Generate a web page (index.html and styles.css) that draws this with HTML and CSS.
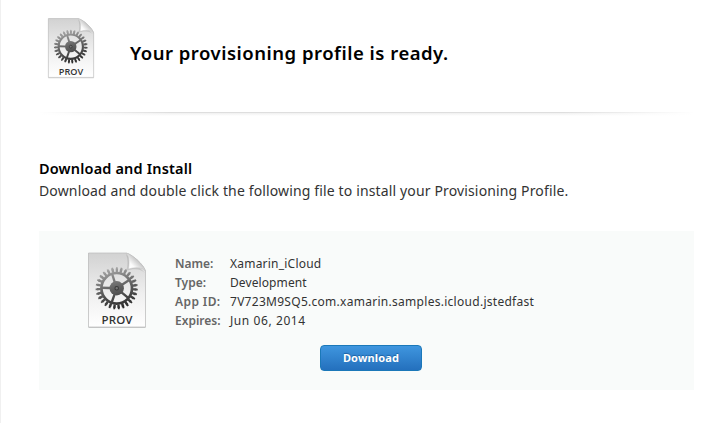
FILE: index.html
```html
<!DOCTYPE html>
<html lang="en">
<head>
<meta charset="utf-8">
<title>Provisioning profile</title>
<link rel="stylesheet" href="styles.css">
</head>
<body>
<svg class="defs" aria-hidden="true">
  <defs>
    <linearGradient id="paper" x1="0" y1="0" x2="0" y2="1"><stop offset="0" stop-color="#d2d2d2"/><stop offset=".55" stop-color="#efefef"/><stop offset="1" stop-color="#fff"/></linearGradient>
    <linearGradient id="metal" gradientUnits="userSpaceOnUse" x1="-6" y1="-20" x2="6" y2="20"><stop offset="0" stop-color="#a8a8a8"/><stop offset=".5" stop-color="#606060"/><stop offset="1" stop-color="#282828"/></linearGradient>
    <linearGradient id="fold" gradientUnits="userSpaceOnUse" x1="42" y1="18" x2="52" y2="8"><stop offset="0" stop-color="#fff"/><stop offset=".35" stop-color="#fafafa"/><stop offset="1" stop-color="#b8b8b8"/></linearGradient>
    <symbol id="profile" viewBox="0 0 60 78">
      <path d="M1.500 2H39C45 3 57 14 58.500 20V77H1.500Z" fill="#000" opacity=".2"/>
      <path d="M1.500 2H39C45 3 57 14 58.500 20V76H1.500Z" fill="url(#paper)" stroke="#bbb" stroke-width=".7"/>
      <path d="M39 3C41 8 41 15 39 20C47 17 54 18 58 22Z" fill="#000" opacity=".1"/>
      <path d="M39 2C42.500 6 42.500 12 41.500 18C48 16 55 16 58.500 20C57 14 45 3 39 2Z" fill="url(#fold)" stroke="#bbb" stroke-width=".4"/>
      <g transform="translate(29.700 37.300) scale(1.040)" fill="none" stroke="url(#metal)">
        <circle r="17.300" stroke-width="3.600" pathLength="54" stroke-dasharray="1.150 .85"/>
        <circle r="18.300" stroke-width="4" pathLength="54" stroke-dasharray=".75 1.250" stroke-dashoffset="-.2"/>
        <circle r="14.700" stroke-width="2.600"/>
        <path d="M0 0L-4.300-13.500M0 0L12-8M0 0L10.800 9M0 0L-4.800 13.500M0 0L-14.300-.5" stroke-width="2.300"/>
        <circle r="6.900" fill="url(#metal)" stroke="none"/>
        <circle r="1.700" fill="#777" stroke="#3a3a3a" stroke-width="1"/>
      </g>
      <text class="icon-label" x="30" y="72.500" text-anchor="middle" textLength="31">PROV</text>
    </symbol>
  </defs>
</svg>
<main class="page">
  <header class="header">
    <svg class="icon-small"><use href="#profile"/></svg>
    <h1 class="title">Your provisioning profile is ready.</h1>
  </header>
  <div class="divider"></div>
  <section class="intro">
    <h2 class="subtitle">Download and Install</h2>
    <p class="text">Download and double click the following file to install your Provisioning Profile.</p>
  </section>
  <section class="panel">
    <div class="details">
      <svg class="icon-large"><use href="#profile"/></svg>
      <dl class="list">
        <dt>Name:</dt><dd class="name">Xamarin_iCloud</dd>
        <dt>Type:</dt><dd class="type">Development</dd>
        <dt class="key-appid">App ID:</dt><dd class="appid">7V723M9SQ5.com.xamarin.samples.icloud.jstedfast</dd>
        <dt>Expires:</dt><dd class="date">Jun 06, 2014</dd>
      </dl>
    </div>
    <button class="button">Download</button>
  </section>
</main>
</body>
</html>
```
FILE: styles.css
```css
* { box-sizing: border-box; }
body { margin: 0; background: #fff; font-family: "Noto Sans", sans-serif; color: #333; }
.defs { position: absolute; width: 0; height: 0; }
.page { height: 423px; padding: 17px 34px 0 38px; border-left: 1px solid #f0f0f0; overflow: hidden; }
.header { display: flex; height: 95px; padding-left: 8px; }
.icon-small { width: 48px; height: 62px; flex: none; }
.icon-label { font: 600 11.5px "Open Sans", sans-serif; fill: #333; }
.title { margin: 22px 0 0 35px; font-size: 18.5px; line-height: 28px; font-weight: 600; letter-spacing: .5px; color: #000; white-space: nowrap; }
.divider { height: 4px; background: linear-gradient(90deg, #fff, transparent 20%, transparent 80%, #fff), linear-gradient(#dedede 0 1px, #f0f0f0 1px, #fff); }
.intro { margin-top: 41px; height: 74px; }
.subtitle { margin: 0; font-size: 14.5px; line-height: 22px; font-weight: 600; letter-spacing: .17px; color: #000; }
.text { margin: 1px 0 0; font-size: 14px; line-height: 22px; letter-spacing: .14px; white-space: nowrap; }
.panel { height: 159px; padding: 20px 0 0 48px; background: #f9fbfa; }
.details { display: flex; height: 94px; }
.icon-large { width: 60px; height: 78px; flex: none; }
.list { display: grid; grid-template-columns: 55px auto; grid-auto-rows: 19px; margin: 3px 0 0 28px; font-size: 12px; line-height: 19px; white-space: nowrap; }
.list dt { color: #666; font-weight: 600; }
.list dd { margin: 0; }
.key-appid { letter-spacing: .4px; }
.name { letter-spacing: .22px; }
.type { letter-spacing: .1px; }
.appid { letter-spacing: .28px; }
.date { letter-spacing: .58px; }
.button { display: block; width: 102px; height: 26px; margin-left: 233px; padding: 0; border: 1px solid #1b78b9; border-radius: 4px; background: linear-gradient(#3f96df, #2470bd); color: #fff; font: 700 11px/22px "Noto Sans", sans-serif; letter-spacing: .15px; text-shadow: 0 -1px 1px #1d60a0; }
```
